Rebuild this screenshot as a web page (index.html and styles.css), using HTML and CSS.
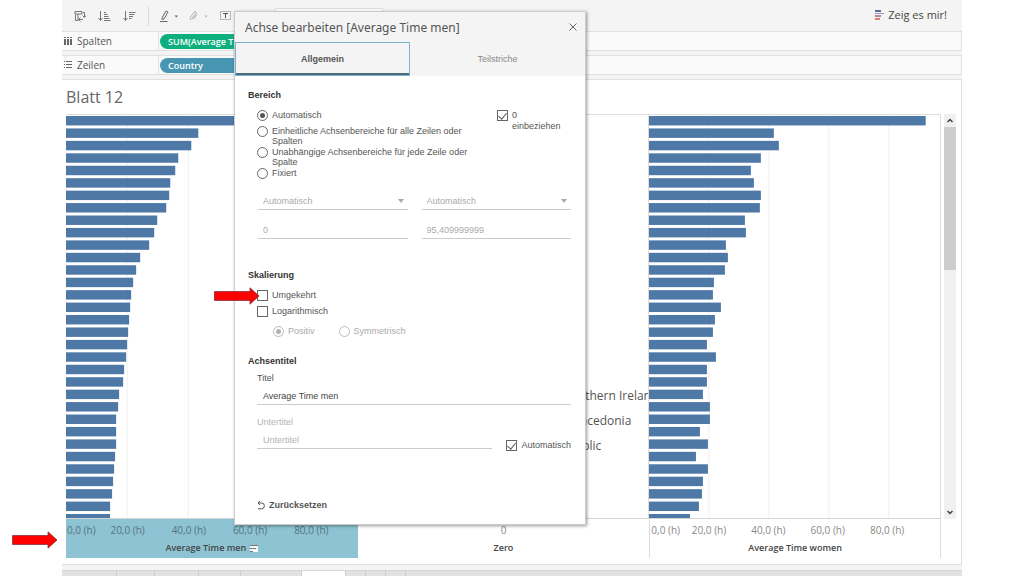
FILE: index.html
```html
<!DOCTYPE html>
<html lang="de">
<head>
<meta charset="utf-8">
<title>Blatt 12</title>
<link rel="stylesheet" href="styles.css">
</head>
<body>
<div class="app">
  <header class="toolbar">
    <button class="tool" aria-label="Zeilen und Spalten tauschen"><svg width="12" height="12" viewBox="0 0 12 12" fill="none" stroke="#777"><path d="M1 1.500h7v2.500H1zM1.500 4v6.500H4V4M9 2.500h1.500V7M8.500 5.500l2 2 1.500-2M4.500 9.500H9M6.500 7.500l-2 2 2 2"/></svg></button>
    <button class="tool" aria-label="Aufsteigend sortieren"><svg width="13" height="12" viewBox="0 0 13 12" fill="none" stroke="#777"><path d="M2.500 1v9M.5 8l2 2.500 2-2.500M6 2.500h2M6 4.500h3.500M6 6.500h4.500M6 8.500h5.500M6 10.500h6.500"/></svg></button>
    <button class="tool" aria-label="Absteigend sortieren"><svg width="13" height="12" viewBox="0 0 13 12" fill="none" stroke="#777"><path d="M2.500 1v9M.5 8l2 2.500 2-2.500M6 2.500h6.500M6 4.500h5.500M6 6.500h4M6 8.500h2.500"/></svg></button>
    <span class="divider"></span>
    <button class="tool split" aria-label="Hervorheben"><svg width="18" height="12" viewBox="0 0 18 12" fill="none" stroke="#666"><path d="M2 8l4-7 2 1-4 7-2 .5zM0 11.500h7.500"/><path d="M14.500 5.500h3.500l-1.700 2z" fill="#666" stroke="none"/></svg></button>
    <button class="tool split faint" aria-label="Gruppieren"><svg width="19" height="12" viewBox="0 0 19 12" fill="none" stroke="#777"><path d="M1 8l4-6q2-1 2.500 1L3 9.500M3.500 8l3-4.500M3 9.500q-2 0-2-1.500M5 9l3-4.500"/><path d="M15.500 5.500h3l-1.500 2z" fill="#777" stroke="none"/></svg></button>
    <button class="tool" aria-label="Beschriftungen"><svg width="11" height="11" viewBox="0 0 11 11" fill="none" stroke="#777"><path stroke-dasharray="1 1" d="M.5 1.500h10v8H.5z"/><path stroke="#555" d="M3 3.500h5M5.500 3.500V8"/></svg></button>
    <span class="combo"></span>
    <button class="showme"><svg width="9" height="10" viewBox="0 0 9 10"><path fill="#5c6b92" d="M0 0h6v2H0z"/><path fill="#8c9bc0" d="M0 3h9v1H0z"/><path fill="#b08a9a" d="M0 5h6v2H0z"/><path fill="#ea7b70" d="M0 8h5v2H0z"/></svg>Zeig es mir!</button>
  </header>

  <section class="shelf">
    <span class="shelf-name"><svg width="8" height="8" viewBox="0 0 8 8" fill="#666"><path d="M0 0h2v1H0zM0 2h2v6H0zM3 0h2v1H3zM3 2h2v6H3zM6 0h2v1H6zM6 2h2v6H6z"/></svg>Spalten</span>
    <button class="pill green">SUM(Average Time men)</button>
  </section>
  <section class="shelf">
    <span class="shelf-name"><svg width="8" height="8" viewBox="0 0 8 8" fill="#666"><path d="M0 0h1v1H0zM2 0h6v1H2zM0 3h1v1H0zM2 3h6v1H2zM0 6h1v1H0zM2 6h6v1H2z"/></svg>Zeilen</span>
    <button class="pill blue">Country</button>
  </section>

  <main class="sheet">
    <h1 class="sheet-title">Blatt 12</h1>
    <div class="chart">
      <div class="pane"><svg class="bars" id="men" viewBox="0 0 291 405" preserveAspectRatio="none"></svg></div>
      <div class="pane marks">
        <span class="mark over">Northern Ireland</span>
        <span class="mark">Macedonia</span>
        <span class="mark short">Republic</span>
      </div>
      <div class="pane last"><svg class="bars" id="women" viewBox="0 0 291 405" preserveAspectRatio="none"></svg></div>
      <div class="scroll">
        <svg width="12" height="13" viewBox="0 0 12 13" fill="none" stroke="#444" stroke-width="1.500"><path d="M3.500 8L6 5.500 8.500 8"/></svg>
        <span class="thumb"></span>
        <svg class="down" width="12" height="13" viewBox="0 0 12 13" fill="none" stroke="#444" stroke-width="1.500"><path d="M3.500 5L6 7.500 8.500 5"/></svg>
      </div>
      <div class="axis selected">
        <div class="ticks"><span>0,0 (h)</span><span>20,0 (h)</span><span>40,0 (h)</span><span>60,0 (h)</span><span>80,0 (h)</span></div>
        <div class="axis-title">Average Time men <svg width="8" height="7" viewBox="0 0 8 7"><path fill="#f2f8fa" d="M0 0h8v7H0z"/><path fill="#777" d="M0 0h8v1H0zM0 3h6v1H0zM0 6h3v1H0z"/></svg></div>
      </div>
      <div class="axis">
        <div class="zero">0</div>
        <div class="axis-title">Zero</div>
      </div>
      <div class="axis edged">
        <div class="ticks"><span>0,0 (h)</span><span>20,0 (h)</span><span>40,0 (h)</span><span>60,0 (h)</span><span>80,0 (h)</span></div>
        <div class="axis-title">Average Time women</div>
      </div>
    </div>
  </main>

  <footer class="tabs"><i class="w55"></i><i class="w38"></i><i class="w44"></i><i class="w42"></i><i class="w61"></i><i class="w44 active"></i><i class="w20"></i><i class="w20"></i><i class="w20"></i></footer>

  <div class="dialog" role="dialog" aria-labelledby="dlg-title">
    <div class="dialog-head">
      <h2 id="dlg-title">Achse bearbeiten [Average Time men]</h2>
      <button class="close" aria-label="Schließen"><svg width="8" height="8" viewBox="0 0 8 8" stroke="#666"><path d="M.5.5l7 7M7.500.5l-7 7"/></svg></button>
    </div>
    <div class="dialog-tabs">
      <button class="dtab current">Allgemein</button>
      <button class="dtab">Teilstriche</button>
    </div>
    <form class="dialog-body">
      <h3>Bereich</h3>
      <div class="range">
        <div class="options">
          <label class="opt first"><input type="radio" name="range" checked><span>Automatisch</span></label>
          <label class="opt"><input type="radio" name="range"><span>Einheitliche Achsenbereiche für alle Zeilen oder Spalten</span></label>
          <label class="opt"><input type="radio" name="range"><span>Unabhängige Achsenbereiche für jede Zeile oder Spalte</span></label>
          <label class="opt"><input type="radio" name="range"><span>Fixiert</span></label>
        </div>
        <label class="opt zero-opt"><input type="checkbox" checked><span>0<br>einbeziehen</span></label>
      </div>
      <div class="limits">
        <div class="select"><select aria-label="Beginn" disabled><option>Automatisch</option></select><svg width="6" height="4" viewBox="0 0 6 4"><path fill="#aaa" d="M0 0h6L3 4z"/></svg></div>
        <div class="select"><select aria-label="Ende" disabled><option>Automatisch</option></select><svg width="6" height="4" viewBox="0 0 6 4"><path fill="#aaa" d="M0 0h6L3 4z"/></svg></div>
        <input class="field" aria-label="Startwert" value="0" disabled>
        <input class="field" aria-label="Endwert" value="95,409999999" disabled>
      </div>

      <h3>Skalierung</h3>
      <div class="scale">
        <label class="opt"><input type="checkbox"><span>Umgekehrt</span></label>
        <label class="opt"><input type="checkbox"><span>Logarithmisch</span></label>
        <div class="sub">
          <label class="opt off"><input type="radio" name="log" checked disabled><span>Positiv</span></label>
          <label class="opt off"><input type="radio" name="log" disabled><span>Symmetrisch</span></label>
        </div>
      </div>

      <h3>Achsentitel</h3>
      <div class="titles">
        <label class="cap" for="t1">Titel</label>
        <input class="field" id="t1" value="Average Time men">
        <label class="cap off second" for="t2">Untertitel</label>
        <div class="subtitle">
          <input class="field" id="t2" placeholder="Untertitel" disabled>
          <label class="opt"><input type="checkbox" checked><span>Automatisch</span></label>
        </div>
      </div>
      <button type="button" class="reset"><svg width="8" height="9" viewBox="0 0 8 9" fill="none" stroke="#555"><path d="M3 0L1 2l2 2M1 2h3.500a2.800 2.800 0 0 1 0 5.800H1"/></svg>Zurücksetzen</button>
    </form>
  </div>
</div>

<svg class="arrow at-axis" width="46" height="18" viewBox="0 0 46 18"><path fill="#fe0000" stroke="#8a3040" stroke-width=".8" d="M.5 4.500H36V.8L45 9l-9 8.200V13.500H.5z"/></svg>
<svg class="arrow at-option" width="46" height="18" viewBox="0 0 46 18"><path fill="#fe0000" stroke="#8a3040" stroke-width=".8" d="M.5 4.500H36V.8L45 9l-9 8.200V13.500H.5z"/></svg>
<script src="script.js"></script>
</body>
</html>
```
FILE: styles.css
```css
* { box-sizing: border-box; }
body {
  margin: 0;
  background: #fff;
  color: #555;
  font-family: "Open Sans", "Noto Sans", sans-serif;
  overflow: hidden;
}
button, input, select { font: inherit; color: inherit; margin: 0; padding: 0; border: 0; background: none; border-radius: 0; }
svg { flex: none; }
h1, h2, h3 { margin: 0; font-weight: 400; }

.app {
  position: relative;
  display: flex;
  flex-direction: column;
  height: 100vh;
  margin: 0 62px;
  background: #f4f4f4;
}

.toolbar { display: flex; align-items: center; gap: 12px; height: 31px; padding: 0 15px 0 12px; flex: none; }
.tool { display: flex; }
.faint { opacity: .5; }
.divider { width: 1px; height: 20px; background: #ddd; }
.split { margin-left: -1px; }
.combo { width: 108px; height: 16px; margin-left: 32px; border: 1px solid #ddd; background: #fff; }
.showme { display: flex; align-items: center; gap: 4px; margin-left: auto; font-size: 11px; line-height: 14px; padding-bottom: 2px; color: #444; }

.shelf {
  display: flex;
  align-items: center;
  flex: none;
  height: 20px;
  margin-bottom: 4px;
  background: #fafafa;
  border: 1px solid #e0e0e0;
  border-left: 0;
}
.shelf-name { display: flex; align-items: center; gap: 5px; width: 97px; height: 18px; padding-left: 2px; border-right: 1px solid #e4e4e4; font-size: 10px; }
.pill { height: 15px; width: 190px; margin-left: 1px; padding-left: 8px; border-radius: 8px; color: #fff; font-size: 9px; font-weight: 600; line-height: 15px; text-align: left; }
.green { background: #0caf7d; }
.blue { background: #4996b2; }

.sheet { display: flex; flex-direction: column; flex: 1; min-height: 0; padding: 0 5px 6px 4px; background: #fff; border: 1px solid #e0e0e0; border-left: 0; }
.sheet-title { height: 34px; line-height: 34px; font-size: 16px; color: #666; }
.chart { display: grid; grid-template-columns: 1fr 1fr 1fr 15px; grid-template-rows: 1fr 39px; flex: 1; min-height: 0; }
.pane { position: relative; min-width: 0; min-height: 0; border-top: 1px solid #ddd; border-bottom: 1px solid #d4d4d4; overflow: hidden; }
.last { border-right: 1px solid #ddd; }
.bars { display: block; width: 100%; height: 100%; }
.bar { fill: #4e79a7; }
.gridline { stroke: #f0f0f0; }
.marks { display: flex; flex-direction: column; align-items: flex-end; padding-top: 268px; border-right: 1px solid #ddd; }
.mark { flex: none; height: 25px; line-height: 25px; padding-right: 17px; font-size: 12px; color: #555; white-space: nowrap; }
.over { padding-right: 0; margin-right: -10px; }
.short { padding-right: 47px; }

.scroll { display: flex; flex-direction: column; width: 12px; margin-left: 3px; background: #f0f0f0; }
.thumb { height: 143px; background: #cdcdcd; }
.down { margin-top: auto; }

.axis { display: flex; flex-direction: column; min-width: 0; font-size: 10px; color: #888; }
.selected { background: #8dc3d3; color: #56737e; }
.edged { border-left: 1px solid #ddd; border-right: 1px solid #ddd; }
.ticks { display: grid; grid-template-columns: 31px repeat(4, 21%); height: 23px; line-height: 23px; white-space: nowrap; }
.edged .ticks { grid-template-columns: 29px repeat(4, 20.5%); }
.ticks span + span { text-align: center; }
.ticks span:first-child { padding-left: 1px; }
.zero { height: 23px; line-height: 23px; text-align: center; }
.axis-title { display: flex; align-items: center; justify-content: center; gap: 4px; height: 12px; line-height: 12px; font-size: 9px; font-weight: 600; color: #444; }

.tabs { display: flex; flex: none; height: 6px; margin-top: 5px; background: #e2e2e2; border-top: 1px solid #d6d6d6; }
.tabs i { border-right: 1px solid #ccc; }
.w55 { width: 55px; } .w38 { width: 38px; } .w44 { width: 44px; } .w42 { width: 42px; } .w61 { width: 61px; } .w20 { width: 20px; }
.tabs .active { background: #fff; }

.dialog {
  position: absolute;
  left: 172px;
  top: 11px;
  width: 352px;
  height: 514px;
  background: #fff;
  border: 1px solid #ccc;
  box-shadow: 1px 1px 3px rgba(0, 0, 0, .4);
  font-family: "Liberation Sans", Arial, sans-serif;
  font-size: 9px;
}
.dialog-head { display: flex; align-items: center; justify-content: space-between; height: 30px; padding: 0 8px 0 10px; background: #f4f4f4; }
.dialog-head h2 { font-family: "Noto Sans", "Open Sans", sans-serif; font-size: 12px; color: #555; }
.close { display: flex; }
.dialog-tabs { display: grid; grid-template-columns: 1fr 1fr; height: 34px; background: #f4f4f4; }
.dtab { color: #888; }
.current { font-weight: 700; color: #555; border: 1px solid #7fb2cc; box-shadow: inset 0 -2px #4d6b7a; }
.dialog-body { display: flex; flex-direction: column; padding: 12px 14px 0 13px; }
.dialog-body h3 { font-size: 9px; font-weight: 700; line-height: 14px; color: #333; }

.opt { display: flex; align-items: flex-start; gap: 4px; line-height: 10px; white-space: nowrap; }
.opt input { appearance: none; flex: none; width: 11px; height: 11px; border: 1px solid #666; background: #fff; display: grid; place-items: center; }
.opt input[type="radio"] { border-radius: 50%; }
.opt input[type="radio"]:checked::before { content: ""; width: 5px; height: 5px; border-radius: 50%; background: #555; }
.opt input[type="checkbox"]:checked::before { content: ""; width: 4px; height: 7px; margin-bottom: 2px; border: solid #555; border-width: 0 1px 1px 0; transform: rotate(40deg); }
.off { color: #aaa; }
.off input { opacity: .45; }

.range { display: flex; justify-content: space-between; padding: 8px 0 0 9px; }
.options { display: flex; flex-direction: column; gap: 1px; width: 222px; }
.options .opt { white-space: normal; }
.first { margin-bottom: 4px; }
.zero-opt { width: 74px; line-height: 11px; }
.limits { display: grid; grid-template-columns: 1fr 1fr; gap: 11px 14px; padding: 13px 0 29px 10px; color: #aaa; }
.select { display: grid; align-items: center; height: 18px; border-bottom: 1px solid #ccc; }
.select select { grid-area: 1 / 1; appearance: none; width: 100%; padding-left: 5px; opacity: 1; }
.select svg { grid-area: 1 / 1; justify-self: end; margin-right: 4px; pointer-events: none; }
.field { width: 100%; min-width: 0; height: 18px; padding-left: 6px; border-bottom: 1px solid #ccc; }
.field::placeholder { color: #b4b4b4; opacity: 1; }

.scale { display: flex; flex-direction: column; gap: 5px; padding: 8px 0 17px 9px; }
.sub { display: flex; gap: 24px; padding: 4px 0 0 16px; }
.titles { display: flex; flex-direction: column; padding: 4px 0 0 9px; }
.cap { line-height: 12px; }
.titles .field { color: #444; }
.limits .field { padding-left: 5px; }
.titles > .field { margin-top: 3px; }
.second { margin-top: 11px; color: #b4b4b4; }
.subtitle { display: flex; align-items: flex-start; gap: 14px; margin-top: 3px; }
.subtitle .opt { padding-top: 9px; }
.reset { display: flex; align-items: center; gap: 4px; align-self: flex-start; margin: 47px 0 0 9px; font-weight: 700; line-height: 14px; }

.arrow { position: absolute; }
.at-axis { left: 12px; top: 531px; }
.at-option { left: 214px; top: 287px; }
```
FILE: script.js
```js
const NS = "http://www.w3.org/2000/svg";
const men = [280, 132, 125, 112, 109, 104, 103, 100, 91, 88, 83, 74, 70, 67, 65, 64, 63, 62, 61, 60, 58, 57, 53, 52, 50, 50, 50, 49, 48, 47, 46, 44, 44];
const women = [277, 125, 130, 112, 102, 105, 112, 111, 96, 97, 77, 79, 76, 65, 64, 72, 66, 64, 58, 67, 58, 58, 54, 61, 61, 51, 59, 47, 59, 54, 53, 50, 41];

function add(svg, tag, attrs) {
  const el = document.createElementNS(NS, tag);
  for (const key in attrs) el.setAttribute(key, attrs[key]);
  svg.appendChild(el);
}

function draw(id, values, step) {
  const svg = document.getElementById(id);
  for (let k = 1; k < 5; k++) {
    add(svg, "line", { class: "gridline", x1: k * step, x2: k * step, y1: 0, y2: 405 });
  }
  values.forEach((v, i) => {
    add(svg, "rect", { class: "bar", x: 0, y: 1 + i * 12.5, width: v, height: 9.5 });
  });
}

draw("men", men, 61);
draw("women", women, 60);
```
